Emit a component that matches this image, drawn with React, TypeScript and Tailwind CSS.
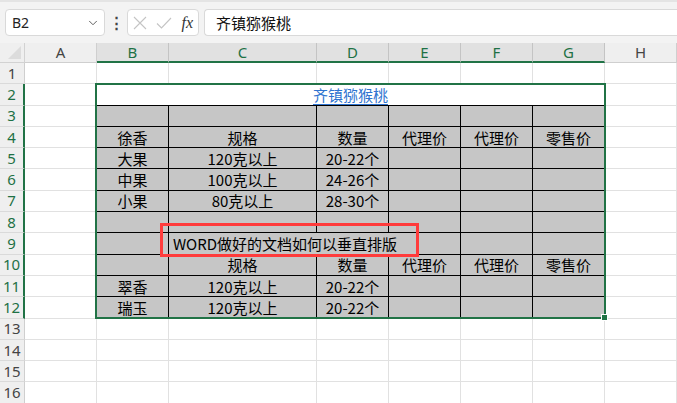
import { ChevronDown } from 'lucide-react';

const CJK = "font-['Noto_Sans_CJK_SC',sans-serif]";
const UI = "font-['Noto_Sans','Noto_Sans_CJK_SC',sans-serif]";

// B..G widths
const W = ['w-[72px]', 'w-[148px]', 'w-[72px]', 'w-[72px]', 'w-[72px]', 'w-[72px]'];
const LETTERS = ['B', 'C', 'D', 'E', 'F', 'G'];

const TABLE: Record<number, string[]> = {
  3: ['', '', '', '', '', ''],
  4: ['徐香', '规格', '数量', '代理价', '代理价', '零售价'],
  5: ['大果', '120克以上', '20-22个', '', '', ''],
  6: ['中果', '100克以上', '24-26个', '', '', ''],
  7: ['小果', '80克以上', '28-30个', '', '', ''],
  8: ['', '', '', '', '', ''],
  10: ['', '规格', '数量', '代理价', '代理价', '零售价'],
  11: ['翠香', '120克以上', '20-22个', '', '', ''],
  12: ['瑞玉', '120克以上', '20-22个', '', '', ''],
};

function FormulaBar() {
  return (
    <div className="h-[43px] bg-[#f3f3f3] border-t-2 border-[#e4e4e4] flex items-start pt-[7px]">
      <div className="ml-[5px] w-[100px] h-[27px] bg-white border border-[#d9d9d9] rounded-[4px] flex items-center justify-between pl-[6px] pr-[4px]">
        <span className={`${UI} text-[14px] text-[#222]`}>B2</span>
        <ChevronDown className="w-[14px] h-[14px] text-[#555]" strokeWidth={1.6} />
      </div>
      <div className="w-[22px] h-[27px] flex items-center justify-center text-[#444] text-[15px] font-bold">⋮</div>
      <div className="w-[72px] h-[27px] bg-white border border-[#d9d9d9] rounded-[4px] flex items-center justify-between px-[5px]">
        <svg width="14" height="14" viewBox="0 0 14 14" className="text-[#c4c4c4]">
          <path d="M1 1L13 13M13 1L1 13" stroke="currentColor" strokeWidth="1.1" fill="none" />
        </svg>
        <svg width="16" height="14" viewBox="0 0 16 14" className="text-[#c4c4c4]">
          <path d="M1 7.5L5.5 12L15 2" stroke="currentColor" strokeWidth="1.1" fill="none" />
        </svg>
        <span className="font-['Liberation_Serif',serif] italic text-[16px] text-[#333] leading-none">fx</span>
      </div>
      <div className="ml-[5px] flex-1 h-[27px] bg-white border border-r-0 border-[#d9d9d9] rounded-l-[4px] flex items-center pl-[11px]">
        <span className={`${CJK} text-[15px] text-[#111] leading-none`}>齐镇猕猴桃</span>
      </div>
    </div>
  );
}

function ColumnHeader() {
  return (
    <div className={`flex h-[20px] ${UI} text-[15px] leading-none`}>
      <div className="w-[25px] bg-[#efefef] border-r border-b border-[#d2d2d2] flex items-end justify-end p-[3px]">
        <div className="w-0 h-0 border-l-[13px] border-l-transparent border-b-[13px] border-b-[#dcdcdc]" />
      </div>
      <div className="w-[72px] bg-[#efefef] border-r border-b border-[#cfcfcf] flex items-center justify-center text-[#444]">A</div>
      {LETTERS.map((l, i) => (
        <div
          key={l}
          className={`${W[i]} bg-[#e1e1e1] border-r border-r-[#c4c4c4] border-b-2 border-b-[#217346] flex items-center justify-center text-[#1e7145]`}
        >
          {l}
        </div>
      ))}
      <div className="w-[72px] bg-[#efefef] border-r border-b border-[#cfcfcf] flex items-center justify-center text-[#444]">H</div>
    </div>
  );
}

function RowHead({ n }: { n: number }) {
  const sel = n >= 2 && n <= 12;
  return (
    <div
      className={`w-[25px] bg-[#efefef] border-b border-b-[#dadada] flex items-center justify-center ${UI} text-[15px] leading-none ${
        sel ? 'border-r-2 border-r-[#217346] text-[#1e7145]' : 'border-r border-r-[#cfcfcf] text-[#444]'
      }`}
    >
      {n}
    </div>
  );
}

function TableCells({ r }: { r: number }) {
  if (r === 2) {
    return (
      <div className="w-[508px] bg-white border-b border-b-black border-r border-r-[#e1e1e1] flex items-center justify-center">
        <span className={`${CJK} text-[15px] leading-none text-[#2f74d0] underline underline-offset-[3px]`}>齐镇猕猴桃</span>
      </div>
    );
  }
  if (r === 9) {
    return (
      <>
        <div className="w-[72px] bg-[#c6c6c6] border-r border-b border-black" />
        <div className="w-[292px] bg-[#c6c6c6] border-r border-b border-black flex items-center pl-[4px]">
          <span className={`${CJK} text-[15px] leading-none text-black whitespace-nowrap`}>WORD做好的文档如何以垂直排版</span>
        </div>
        <div className="w-[72px] bg-[#c6c6c6] border-r border-b border-black" />
        <div className="w-[72px] bg-[#c6c6c6] border-r border-b border-black" />
      </>
    );
  }
  const data = TABLE[r];
  if (!data) {
    return (
      <>
        {W.map((w, i) => (
          <div key={i} className={`${w} bg-white border-r border-b border-[#e1e1e1]`} />
        ))}
      </>
    );
  }
  return (
    <>
      {data.map((t, i) => (
        <div
          key={i}
          className={`${W[i]} bg-[#c6c6c6] border-r border-b border-black flex items-center justify-center`}
        >
          <span className={`${CJK} text-[15px] leading-none text-black whitespace-nowrap`}>{t}</span>
        </div>
      ))}
    </>
  );
}

function SheetRow({ r }: { r: number }) {
  const inTable = r >= 3 && r <= 12;
  return (
    <div className="flex h-[21.3px]">
      <RowHead n={r} />
      <div
        className={`w-[72px] bg-white border-b border-b-[#e1e1e1] border-r ${
          inTable ? 'border-r-black' : 'border-r-[#e1e1e1]'
        }`}
      />
      <TableCells r={r} />
      <div className="w-[72px] bg-white border-r border-b border-[#e1e1e1]" />
    </div>
  );
}

export default function App() {
  const rows = Array.from({ length: 16 }, (_, i) => i + 1);
  return (
    <div className="relative w-[677px] h-[403px] overflow-hidden bg-white">
      <FormulaBar />
      <ColumnHeader />
      <div>
        {rows.map((r) => (
          <SheetRow key={r} r={r} />
        ))}
      </div>

      {/* selection B2:G12 */}
      <div className="absolute left-[95px] top-[83px] w-[511px] h-[236px] border-2 border-[#217346] pointer-events-none" />
      <div className="absolute left-[601px] top-[314px] w-[7px] h-[7px] bg-[#217346] border border-white" />

      {/* red annotation box */}
      <div className="absolute left-[160px] top-[223px] w-[259px] h-[34px] border-[3px] border-[#ff3b3b] pointer-events-none" />
    </div>
  );
}
